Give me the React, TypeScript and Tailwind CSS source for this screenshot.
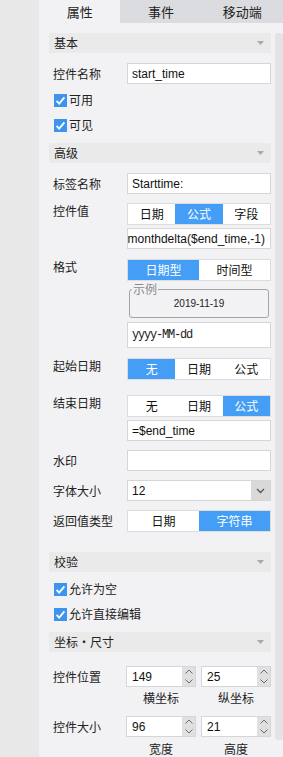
import React from "react";

function Header({ title }: { title: string }) {
  return (
    <div className="h-[20px] bg-[#eaeaea] flex items-center justify-between pl-[5px] pr-[7px]">
      <span className="text-[12px] leading-[20px] text-[#222]">{title}</span>
      <svg width="7" height="4" viewBox="0 0 7 4">
        <path d="M0 0H7L3.5 4Z" fill="#a9a9a9" />
      </svg>
    </div>
  );
}

function Label({ text, top }: { text: string; top?: boolean }) {
  return (
    <span
      className={
        top
          ? "w-[78px] shrink-0 pl-[4px] text-[12px] leading-[16px] text-[#222] self-start"
          : "w-[78px] shrink-0 pl-[4px] text-[12px] leading-[16px] text-[#222]"
      }
    >
      {text}
    </span>
  );
}

function TextBox({ value }: { value?: string }) {
  return (
    <div className="h-[21px] flex-1 min-w-0 bg-white border border-[#d6d6d6] pl-[4px] flex items-center overflow-hidden whitespace-nowrap">
      <span className="text-[12px] leading-[14px] text-[#111] font-['Liberation_Sans',sans-serif]">{value}</span>
    </div>
  );
}

function Seg({ items, active }: { items: string[]; active: number }) {
  return (
    <div
      className={
        items.length === 3
          ? "h-[22px] flex-1 min-w-0 border border-[#dcdcdc] bg-white grid grid-cols-3"
          : "h-[22px] flex-1 min-w-0 border border-[#dcdcdc] bg-white grid grid-cols-2"
      }
    >
      {items.map((t, i) => (
        <div
          key={t}
          className={
            i === active
              ? "flex items-center justify-center text-[12px] leading-[14px] bg-[#459ef6] text-white"
              : "flex items-center justify-center text-[12px] leading-[14px] text-[#111]"
          }
        >
          {t}
        </div>
      ))}
    </div>
  );
}

function Check({ text }: { text: string }) {
  return (
    <div className="h-[20px] flex items-center pl-[5px]">
      <span className="w-[13px] h-[13px] bg-[#3d94ef] flex items-center justify-center">
        <svg width="13" height="13" viewBox="0 0 13 13">
          <path d="M2.6 6.8L5.2 9.6L10.4 3.4" stroke="white" strokeWidth="1.8" fill="none" />
        </svg>
      </span>
      <span className="ml-[2px] text-[12px] leading-[16px] text-[#222]">{text}</span>
    </div>
  );
}

function Spin({ value }: { value: string }) {
  return (
    <div className="w-[70px] h-[21px] shrink-0 flex border border-[#d6d6d6] bg-white">
      <div className="flex-1 min-w-0 pl-[5px] flex items-center text-[12px] leading-[14px] text-[#111] font-['Liberation_Sans',sans-serif]">
        {value}
      </div>
      <div className="w-[13px] bg-[#e0e0e0] flex flex-col items-center justify-between py-[2px]">
        <svg width="8" height="5" viewBox="0 0 8 5">
          <path d="M0.5 4.5L4 1L7.5 4.5" stroke="#6a6a6a" strokeWidth="1" fill="none" />
        </svg>
        <svg width="8" height="5" viewBox="0 0 8 5">
          <path d="M0.5 0.5L4 4L7.5 0.5" stroke="#6a6a6a" strokeWidth="1" fill="none" />
        </svg>
      </div>
    </div>
  );
}

export default function App() {
  return (
    <div className="w-[283px] h-[757px] flex bg-[#e8e8e8] overflow-hidden font-['Noto_Sans_CJK_SC','Noto_Sans',sans-serif] text-[#222]">
      <div className="w-[39px] shrink-0" />
      <div className="w-[244px] shrink-0 flex flex-col">
        <div className="h-[24px] grid grid-cols-3 bg-[#dbdcdf] text-[13px] leading-[16px] text-[#222]">
          <div className="bg-[#f2f2f4] flex items-center justify-center">属性</div>
          <div className="flex items-center justify-center">事件</div>
          <div className="flex items-center justify-center">移动端</div>
        </div>
        <div className="flex-1 flex bg-[#f2f2f4]">
          <div className="w-[236px] shrink-0 pl-[10px] pr-[4px] pt-[10px] flex flex-col">
            <Header title="基本" />
            <div className="mt-[10px] flex items-center">
              <Label text="控件名称" />
              <TextBox value="start_time" />
            </div>
            <div className="mt-[6px]">
              <Check text="可用" />
            </div>
            <div className="mt-[5px]">
              <Check text="可见" />
            </div>

            <div className="mt-[8px]">
              <Header title="高级" />
            </div>
            <div className="mt-[10px] flex items-center">
              <Label text="标签名称" />
              <TextBox value="Starttime:" />
            </div>
            <div className="mt-[9px] flex items-center">
              <Label text="控件值" top />
              <Seg items={["日期", "公式", "字段"]} active={1} />
            </div>
            <div className="mt-[3px] flex items-center">
              <span className="w-[78px] shrink-0" />
              <div className="h-[21px] flex-1 min-w-0 bg-white border border-[#d6d6d6] pr-[5px] flex items-center justify-end overflow-hidden whitespace-nowrap">
                <span className="shrink-0 text-[12px] leading-[14px] text-[#111] font-['Liberation_Sans',sans-serif]">
                  =monthdelta($end_time,-1)
                </span>
              </div>
            </div>
            <div className="mt-[10px] flex items-center">
              <Label text="格式" top />
              <Seg items={["日期型", "时间型"]} active={0} />
            </div>
            <div className="mt-[2px] flex">
              <span className="w-[80px] shrink-0" />
              <fieldset className="flex-1 min-w-0 mr-[2px] border border-[#a3a3a3] rounded-[3px] flex flex-col items-center">
                <legend className="ml-[2px] px-[1px] text-[12px] leading-[12px] text-[#8a8a8a]">示例</legend>
                <div className="pt-[3px] pb-[7px] text-[10px] leading-[12px] text-[#222] font-['Liberation_Sans',sans-serif]">
                  2019-11-19
                </div>
              </fieldset>
            </div>
            <div className="mt-[4px] flex items-center">
              <span className="w-[78px] shrink-0" />
              <div className="h-[26px] flex-1 min-w-0 bg-white border border-[#d6d6d6] pl-[4px] flex items-center">
                <span className="text-[12px] leading-[14px] tracking-[-1.2px] text-[#222] font-['Liberation_Mono',monospace]">
                  yyyy-MM-dd
                </span>
              </div>
            </div>
            <div className="mt-[10px] flex items-center">
              <Label text="起始日期" top />
              <Seg items={["无", "日期", "公式"]} active={0} />
            </div>
            <div className="mt-[15px] flex items-center">
              <Label text="结束日期" top />
              <Seg items={["无", "日期", "公式"]} active={2} />
            </div>
            <div className="mt-[3px] flex items-center">
              <span className="w-[78px] shrink-0" />
              <TextBox value="=$end_time" />
            </div>
            <div className="mt-[9px] flex items-center">
              <Label text="水印" />
              <TextBox />
            </div>
            <div className="mt-[9px] flex items-center">
              <Label text="字体大小" />
              <div className="flex-1 min-w-0 h-[21px] border border-[#d6d6d6] bg-white flex">
                <div className="flex-1 min-w-0 pl-[4px] flex items-center text-[12px] leading-[14px] text-[#111] font-['Liberation_Sans',sans-serif]">
                  12
                </div>
                <div className="w-[19px] bg-[#d9d9d9] flex items-center justify-center">
                  <svg width="9" height="6" viewBox="0 0 9 6">
                    <path d="M1 1L4.5 4.5L8 1" stroke="#555" strokeWidth="1.3" fill="none" />
                  </svg>
                </div>
              </div>
            </div>
            <div className="mt-[9px] flex items-center">
              <Label text="返回值类型" />
              <Seg items={["日期", "字符串"]} active={1} />
            </div>

            <div className="mt-[20px]">
              <Header title="校验" />
            </div>
            <div className="mt-[7px]">
              <Check text="允许为空" />
            </div>
            <div className="mt-[5px]">
              <Check text="允许直接编辑" />
            </div>

            <div className="mt-[8px]">
              <Header title="坐标・尺寸" />
            </div>
            <div className="mt-[14px] flex items-center">
              <span className="w-[77px] shrink-0 pl-[4px] text-[12px] leading-[16px] text-[#222]">控件位置</span>
              <Spin value="149" />
              <div className="w-[5px] shrink-0" />
              <Spin value="25" />
            </div>
            <div className="mt-[3px] flex text-[12px] leading-[16px] text-[#222]">
              <span className="w-[77px] shrink-0" />
              <span className="w-[70px] text-center">横坐标</span>
              <span className="w-[5px]" />
              <span className="w-[70px] text-center">纵坐标</span>
            </div>
            <div className="mt-[10px] flex items-center">
              <span className="w-[77px] shrink-0 pl-[4px] text-[12px] leading-[16px] text-[#222]">控件大小</span>
              <Spin value="96" />
              <div className="w-[5px] shrink-0" />
              <Spin value="21" />
            </div>
            <div className="mt-[4px] flex text-[12px] leading-[16px] text-[#222]">
              <span className="w-[77px] shrink-0" />
              <span className="w-[70px] text-center">宽度</span>
              <span className="w-[5px]" />
              <span className="w-[70px] text-center">高度</span>
            </div>
          </div>
          <div className="w-[8px] shrink-0 pt-[10px]">
            <div className="h-[707px] bg-[#e3e3e5] rounded-[3px]" />
          </div>
        </div>
      </div>
    </div>
  );
}
